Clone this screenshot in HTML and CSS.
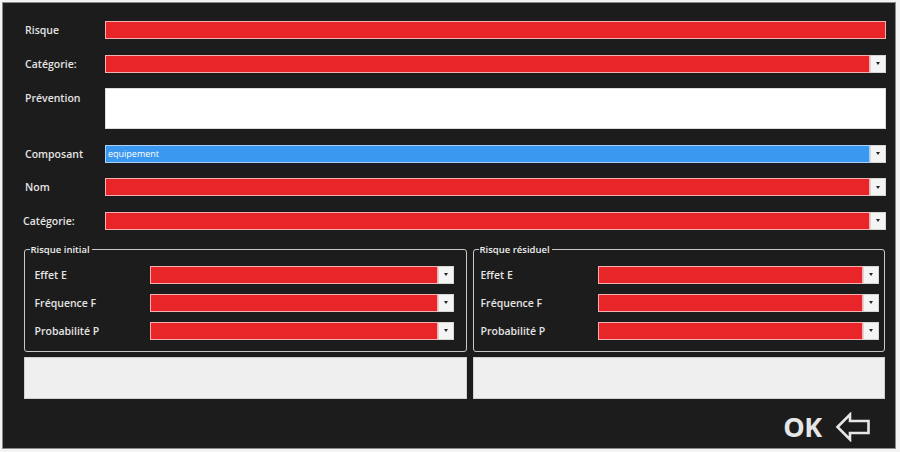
FILE: index.html
```html
<!DOCTYPE html>
<html lang="fr">
<head>
<meta charset="utf-8">
<title>Risque</title>
<link rel="stylesheet" href="styles.css">
</head>
<body>
<div class="frame">
  <div class="form">
    <div class="label">Risque</div>
    <div class="input red"></div>

    <div class="label">Catégorie:</div>
    <div class="select"><div class="fill red"></div><div class="btn"><span class="tri"></span></div></div>

    <div class="label top">Prévention</div>
    <div class="textarea"></div>

    <div class="label">Composant</div>
    <div class="select"><div class="fill blue">equipement</div><div class="btn"><span class="tri"></span></div></div>

    <div class="label">Nom</div>
    <div class="select"><div class="fill red"></div><div class="btn"><span class="tri"></span></div></div>

    <div class="label shift">Catégorie:</div>
    <div class="select"><div class="fill red"></div><div class="btn"><span class="tri"></span></div></div>
  </div>

  <div class="groups">
    <fieldset class="group group-left">
      <legend>Risque initial</legend>
      <div class="grid">
        <div class="label">Effet E</div>
        <div class="select"><div class="fill red"></div><div class="btn"><span class="tri"></span></div></div>
        <div class="label">Fréquence F</div>
        <div class="select"><div class="fill red"></div><div class="btn"><span class="tri"></span></div></div>
        <div class="label">Probabilité P</div>
        <div class="select"><div class="fill red"></div><div class="btn"><span class="tri"></span></div></div>
      </div>
    </fieldset>
    <fieldset class="group group-right">
      <legend>Risque résiduel</legend>
      <div class="grid">
        <div class="label">Effet E</div>
        <div class="select"><div class="fill red"></div><div class="btn"><span class="tri"></span></div></div>
        <div class="label">Fréquence F</div>
        <div class="select"><div class="fill red"></div><div class="btn"><span class="tri"></span></div></div>
        <div class="label">Probabilité P</div>
        <div class="select"><div class="fill red"></div><div class="btn"><span class="tri"></span></div></div>
      </div>
    </fieldset>
  </div>

  <div class="notes">
    <div class="note"></div>
    <div class="note"></div>
  </div>

  <div class="footer">
    <button class="ok">
      <span class="ok-text">OK</span>
      <svg class="arrow" width="36" height="30" viewBox="0 0 36 30" aria-hidden="true">
        <path d="M2.5 15 L15 2.5 L15 9 L33.5 9 L33.5 21 L15 21 L15 27.5 Z" fill="none" stroke="#e6e6e6" stroke-width="2.6" stroke-linejoin="miter"/>
      </svg>
    </button>
  </div>
</div>
</body>
</html>
```

FILE: styles.css
```css
html, body {
  margin: 0;
  padding: 0;
}
body {
  background: #f3f3f3;
  width: 900px;
  height: 452px;
  overflow: hidden;
  font-family: "Open Sans", "DejaVu Sans", sans-serif;
}
.frame {
  margin: 3px 0 0 3px;
  width: 892px;
  height: 445px;
  background: #1c1c1c;
  box-sizing: border-box;
  padding: 18px 9px 0 21px;
  box-shadow: 0 0 0 1px #8a8a8a;
}
.form {
  display: grid;
  grid-template-columns: 81px 1fr;
  row-gap: 15.5px;
  align-items: center;
}
.label {
  color: #e4e4e4;
  font-size: 10.5px;
  font-weight: 600;
  line-height: 14px;
  white-space: nowrap;
}
.form .label {
  padding-left: 1px;
}
.form .label.shift {
  padding-left: 0;
  margin-left: -1px;
}
.label.top {
  align-self: start;
  padding-top: 3px;
}
.input, .select {
  height: 18px;
  box-sizing: border-box;
}
.input.red {
  background: #e8262a;
  border: 1px solid #f2b0b0;
}
.select {
  display: flex;
}
.fill {
  flex: 1;
  box-sizing: border-box;
  height: 18px;
}
.fill.red {
  background: #e8262a;
  border: 1px solid #f2b0b0;
}
.fill.blue {
  background: #3b98f0;
  border: 1px solid #a9d0f6;
  color: #ffffff;
  font-size: 9px;
  line-height: 15px;
  padding-left: 2px;
}
.btn {
  width: 16px;
  height: 18px;
  box-sizing: border-box;
  background: #f4f4f4;
  border: 1px solid #d6d6d6;
  display: flex;
  align-items: center;
  justify-content: center;
}
.tri {
  width: 0;
  height: 0;
  border-left: 2.5px solid transparent;
  border-right: 2.5px solid transparent;
  border-top: 3px solid #222;
}
.textarea {
  height: 41px;
  background: #ffffff;
  border: 1px solid #dcdcdc;
  box-sizing: border-box;
}
.groups {
  display: grid;
  grid-template-columns: 443px 412px;
  column-gap: 6px;
  margin-top: 15px;
}
.group {
  margin: 0;
  border: 1.5px solid #c9c9c9;
  border-radius: 3px;
  min-width: 0;
  box-sizing: border-box;
  padding-top: 11px;
  padding-bottom: 11.5px;
}
.group legend {
  color: #eeeeee;
  font-size: 9.5px;
  font-weight: 600;
  line-height: 10px;
  padding: 0 2px 0 1px;
}
.group-left {
  padding-left: 9.5px;
  padding-right: 12.5px;
}
.group-left legend {
  margin-left: -5px;
}
.group-right {
  padding-left: 6.5px;
  padding-right: 5.5px;
}
.group-right legend {
  margin-left: -2px;
}
.grid {
  display: grid;
  row-gap: 10px;
  align-items: center;
}
.group-left .grid {
  grid-template-columns: 115px 1fr;
}
.group-right .grid {
  grid-template-columns: 117px 1fr;
}
.notes {
  display: grid;
  grid-template-columns: 443px 412px;
  column-gap: 6px;
  margin-top: 5px;
}
.note {
  height: 42px;
  background: #efefef;
  border: 1px solid #d0d0d0;
  box-sizing: border-box;
}
.footer {
  display: flex;
  justify-content: flex-end;
  margin-top: 13px;
  padding-right: 15px;
}
.ok {
  display: flex;
  align-items: center;
  gap: 13px;
  background: none;
  border: none;
  padding: 0;
  margin: 0;
  height: 30px;
  cursor: pointer;
}
.ok-text {
  color: #e6e6e6;
  font-family: "Open Sans", "DejaVu Sans", sans-serif;
  font-weight: 700;
  font-size: 27px;
  line-height: 30px;
  letter-spacing: -0.3px;
}
.arrow {
  display: block;
}
```
